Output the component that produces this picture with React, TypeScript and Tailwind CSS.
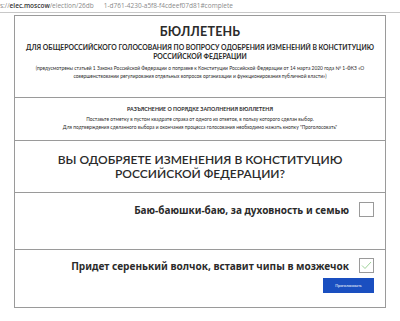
export default function App() {
  return (
    <div className="w-[400px] h-[321px] bg-white overflow-hidden text-[#2b2b2b]" style={{ fontFamily: "Lato, 'Open Sans', sans-serif" }}>
      <div className="h-[13px] border-b border-[#c8c8c8] flex items-center whitespace-nowrap text-[6.5px] text-[#8a8a8a]" style={{ fontFamily: "'Open Sans', sans-serif" }}>
        <span>s://</span>
        <span className="text-[#333] font-semibold">elec.moscow</span>
        <span>/election/26db</span>
        <span className="w-[10px]" />
        <span>1-d761-4230-a5f8-f4cdeef07d81#complete</span>
      </div>
      <div className="mt-[2px] ml-[14px] w-[372px] border border-[#9a9a9a]">
        <div className="h-[82px] border-b border-[#9a9a9a] flex flex-col items-center text-center pt-[9px]">
          <div className="text-[12.5px] font-bold leading-[14px] tracking-[0.2px]">БЮЛЛЕТЕНЬ</div>
          <div className="mt-[4px] text-[6.8px] font-bold leading-[8.5px] px-[3px]">
            ДЛЯ ОБЩЕРОССИЙСКОГО ГОЛОСОВАНИЯ ПО ВОПРОСУ ОДОБРЕНИЯ ИЗМЕНЕНИЙ В КОНСТИТУЦИЮ РОССИЙСКОЙ ФЕДЕРАЦИИ
          </div>
          <div className="mt-[4px] text-[4.9px] leading-[8px] whitespace-nowrap">
            (предусмотрены статьей 1 Закона Российской Федерации о поправке к Конституции Российской Федерации от 14 марта 2020 года № 1-ФКЗ «О
            <br />
            совершенствовании регулирования отдельных вопросов организации и функционирования публичной власти»)
          </div>
        </div>
        <div className="h-[43px] border-b border-[#9a9a9a] flex flex-col items-center text-center pt-[8px]">
          <div className="text-[5.3px] font-bold leading-[7px]">РАЗЪЯСНЕНИЕ О ПОРЯДКЕ ЗАПОЛНЕНИЯ БЮЛЛЕТЕНЯ</div>
          <div className="mt-[2px] text-[4.9px] leading-[8px] whitespace-nowrap">
            <div>Поставьте отметку в пустом квадрате справа от одного из ответов, в пользу которого сделан выбор.</div>
            <div>Для подтверждения сделанного выбора и окончания процесса голосования необходимо нажать кнопку "Проголосовать"</div>
          </div>
        </div>
        <div className="h-[52px] border-b border-[#9a9a9a] flex items-center justify-center text-center">
          <div className="text-[12px] font-semibold leading-[13.5px] whitespace-nowrap">
            ВЫ ОДОБРЯЕТЕ ИЗМЕНЕНИЯ В КОНСТИТУЦИЮ
            <br />
            РОССИЙСКОЙ ФЕДЕРАЦИИ?
          </div>
        </div>
        <div className="h-[57px] border-b border-[#9a9a9a] flex justify-end items-start pt-[9px] pr-[11px]">
          <span className="text-[10px] font-bold leading-[14px] mr-[10px] mt-[1px]" style={{ fontFamily: "'Noto Sans', sans-serif" }}>
            Баю-баюшки-баю, за духовность и семью
          </span>
          <div className="w-[15px] h-[15px] border border-[#9a9a9a]" />
        </div>
        <div className="h-[57px] flex flex-col items-end pt-[8px] pr-[11px]">
          <div className="flex items-start">
            <span className="text-[10.1px] font-bold leading-[14px] mr-[10px] mt-[1px]" style={{ fontFamily: "'Noto Sans', sans-serif" }}>
              Придет серенький волчок, вставит чипы в мозжечок
            </span>
            <div className="w-[15px] h-[15px] border border-[#9a9a9a] flex items-center justify-center">
              <svg width="11" height="9" viewBox="0 0 11 9" fill="none">
                <path d="M1 4.5 L4 7.5 L10 1" stroke="#9fd39a" strokeWidth="1" />
              </svg>
            </div>
          </div>
          <button className="mt-[5px] w-[51px] h-[15px] bg-[#1a4fc0] text-white text-[3.8px] flex items-center justify-center">
            Проголосовать
          </button>
        </div>
      </div>
    </div>
  );
}
